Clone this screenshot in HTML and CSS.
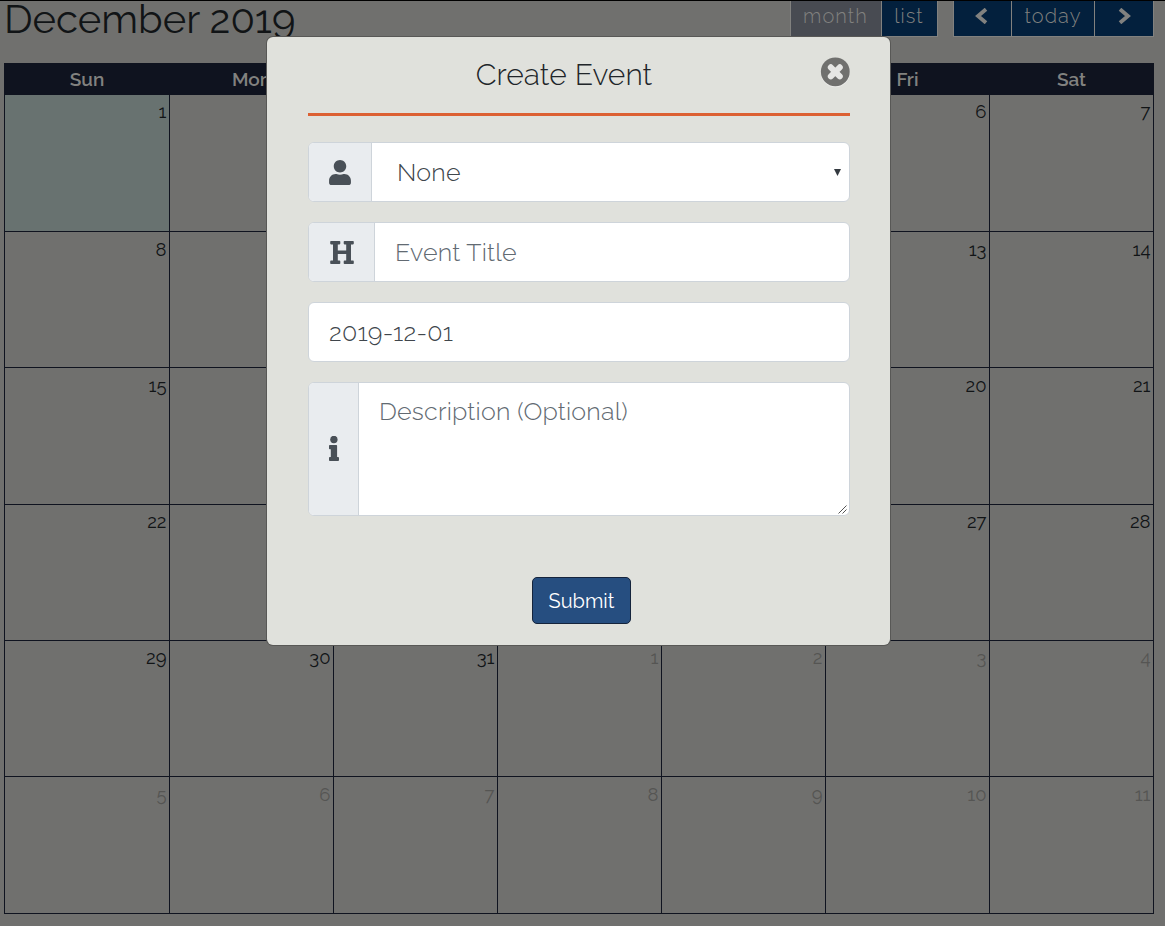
FILE: index.html
```
<!DOCTYPE html>
<html lang="en">
<head>
<meta charset="utf-8">
<title>Calendar</title>
<link rel="stylesheet" href="styles.css">
</head>
<body>
<main class="page">
  <header class="toolbar">
    <h1 class="heading">December 2019</h1>
    <div class="group views"><span class="btn active month">month</span><span class="btn list">list</span></div>
    <div class="group nav">
      <span class="btn arrow prev"><svg width="14" height="16" viewBox="0 0 14 16"><path d="M12 1.200L4 8l8 6.800"/></svg></span>
      <span class="btn today">today</span>
      <span class="btn arrow next"><svg width="14" height="16" viewBox="0 0 14 16"><path d="M2 1.200L10 8l-8 6.800"/></svg></span>
    </div>
  </header>
  <section class="calendar">
    <div class="days"><b>Sun</b><b>Mon</b><b></b><b></b><b></b><b>Fri</b><b>Sat</b></div>
    <div class="grid">
      <i class="current up">1</i><i></i><i></i><i></i><i></i><i class="up">6</i><i class="up">7</i>
      <i>8</i><i></i><i></i><i></i><i></i><i>13</i><i>14</i>
      <i>15</i><i></i><i></i><i></i><i></i><i>20</i><i>21</i>
      <i class="up">22</i><i></i><i></i><i></i><i></i><i class="up">27</i><i class="up">28</i>
      <i class="up">29</i><i class="up">30</i><i class="up">31</i><i class="other up">1</i><i class="other up">2</i><i class="other up">3</i><i class="other up">4</i>
      <i class="other">5</i><i class="other">6</i><i class="other">7</i><i class="other">8</i><i class="other">9</i><i class="other">10</i><i class="other">11</i>
    </div>
  </section>
</main>
<div class="modal">
  <div class="modal-head">
    <h2 class="title">Create Event</h2>
    <svg class="close" width="30" height="31" viewBox="0 0 30 31"><circle cx="15.300" cy="15.900" r="14.400" fill="#eeeeec"/><circle cx="15.300" cy="14.800" r="14.400" fill="#70706e"/><path d="M10.800 10.300l9 9M19.800 10.300l-9 9" stroke="#e6e6e4" stroke-width="6" stroke-linecap="round"/></svg>
  </div>
  <div class="field">
    <span class="addon a-user"><svg width="22" height="25" viewBox="0 0 448 512"><path d="M224 256c70.700 0 128-57.300 128-128S294.700 0 224 0 96 57.300 96 128s57.300 128 128 128zm89.600 32h-16.700c-22.200 10.200-46.900 16-72.900 16s-50.600-5.800-72.900-16h-16.700C60.200 288 0 348.200 0 422.400V464c0 26.500 21.500 48 48 48h352c26.500 0 48-21.500 48-48v-41.600c0-74.200-60.200-134.400-134.400-134.400z"/></svg></span>
    <span class="input select"><span>None</span><svg width="7" height="8" viewBox="0 0 7 8"><path d="M0 1h7L3.500 8z"/></svg></span>
  </div>
  <div class="field">
    <span class="addon a-title"><svg width="24" height="23" viewBox="0 0 24 23"><path d="M1 0h8.500q.8 0 .8.800v1.800q0 .8-.8.800H7.800v6.200h8.400V3.400h-1.700q-.8 0-.8-.8V.8q0-.8.800-.8H23q.8 0 .8.800v1.800q0 .8-.8.800h-2v16.200h2q.8 0 .8.800v1.800q0 .8-.8.800h-8.500q-.8 0-.8-.8v-1.800q0-.8.800-.8h1.700v-6.500H7.800v6.500h1.700q.8 0 .8.800v1.800q0 .8-.8.800H1q-.8 0-.8-.8v-1.800q0-.8.800-.8h2V3.400H1q-.8 0-.8-.8V.8Q.2 0 1 0z"/></svg></span>
    <span class="input hint">Event Title</span>
  </div>
  <div class="field"><span class="input">2019-12-01</span></div>
  <div class="field tall">
    <span class="addon a-info"><svg width="10" height="25" viewBox="0 0 10 25"><circle cx="4.900" cy="3.500" r="3.700"/><path d="M.8 9h6.500q.8 0 .8.800V21h1q.9 0 .9.900v2.200q0 .9-.9.900H.8q-.8 0-.8-.9v-2.200q0-.9.800-.9h1v-7.700h-1q-.8 0-.8-.8V9.800Q0 9 .8 9z"/></svg></span>
    <span class="input hint area"><span>Description (Optional)</span><svg class="grip" width="9" height="9" viewBox="0 0 9 9"><path d="M.5 8.500l8-8M4.500 8.500l4-4"/></svg></span>
  </div>
  <button class="submit">Submit</button>
</div>
</body>
</html>
```
FILE: styles.css
```
* { box-sizing: border-box; }
body { margin: 0; height: 926px; overflow: hidden; background: #70706e; font-family: Raleway, Lato, "Open Sans", sans-serif; font-weight: 400; }
.page { height: 926px; border-top: 1px solid #000; padding: 0 11px 0 4px; }
.toolbar { display: flex; height: 62px; align-items: flex-start; color: #111416; }
.heading { margin: -6px 0 0; flex: 1; font-size: 40px; line-height: 48px; font-weight: 400; white-space: nowrap; }
.group { display: flex; height: 36px; border: 1px solid #81817f; border-top: 0; background: #03203d; }
.views { width: 148px; margin-right: 15px; }
.nav { width: 201px; }
.btn { display: flex; justify-content: center; height: 35px; color: #81817f; font-size: 20px; line-height: 30px; font-weight: 300; letter-spacing: 1.1px; }
.btn + .btn { border-left: 1px solid #81817f; }
.month { width: 90px; background: #484b52; padding-right: 1px; }
.list { width: 56px; padding-right: 1px; }
.today { width: 83px; }
.arrow { width: 59px; padding-top: 7px; }
.prev { width: 57px; padding-right: 3px; }
.next { padding-left: 2px; }
.arrow svg { fill: none; stroke: #81817f; stroke-width: 3.8; }
.calendar { border-left: 1px solid #0f131f; width: 1150px; }
.days { display: grid; grid-template-columns: 165px repeat(6, 164px); height: 32px; background: #0f131f; color: #81817f; text-align: center; font-size: 19px; line-height: 33px; }
.days b { font-weight: 600; padding-right: 1px; }
.grid { display: grid; grid-template-columns: 165px repeat(6, 164px); grid-template-rows: 137px 136px 137px 136px 136px 137px; }
.grid i { font-style: normal; text-align: right; border-right: 1px solid #0f131f; border-bottom: 1px solid #0f131f; padding: 6px 2.500px 0 0; font-size: 18.500px; line-height: 23px; color: #111416; }
.grid .up { padding-top: 5px; }
.grid .other { color: #555553; }
.grid .current { background: #687270; }
.modal { position: absolute; left: 267px; top: 37px; width: 623px; height: 608px; background: #e0e1dc; border-radius: 6px; padding: 0 40px 0 41px; box-shadow: 0 0 0 1px #585856; color: #212529; }
.modal-head { display: flex; height: 79px; border-bottom: 3px solid #dc6033; margin-bottom: 26px; }
.title { flex: 1; margin: 0; text-align: center; font-size: 30px; font-weight: 300; letter-spacing: .1px; line-height: 75px; }
.close { margin: 20px 0 0; }
.field { display: flex; height: 60px; margin-bottom: 20px; border: 1px solid #ced4da; border-radius: 6px; background: #fff; overflow: hidden; }
.addon { display: flex; align-items: center; justify-content: center; background: #e9ecef; border-right: 1px solid #ced4da; fill: #495057; }
.a-user { width: 63px; }
.a-title { width: 66px; padding-left: 1px; }
.a-info { width: 50px; padding: 0 0 1px 1px; }
.input { flex: 1; display: flex; align-items: center; font-size: 25px; font-weight: 300; letter-spacing: .22px; color: #40464c; padding-left: 20px; }
.select { justify-content: space-between; padding: 0 8px 0 25px; fill: #343a40; }
.hint { color: #626a72; }
.tall { height: 134px; margin-bottom: 61px; }
.area { align-items: flex-start; justify-content: space-between; padding-right: 2px; line-height: 56px; }
.grip { align-self: flex-end; margin-bottom: 1px; stroke: #555; fill: none; }
.submit { display: block; margin-left: 224px; width: 99px; height: 47px; padding: 0; background: #264e80; border: 1px solid #15243c; border-radius: 5px; color: #fff; font-family: inherit; font-size: 20px; }
```
